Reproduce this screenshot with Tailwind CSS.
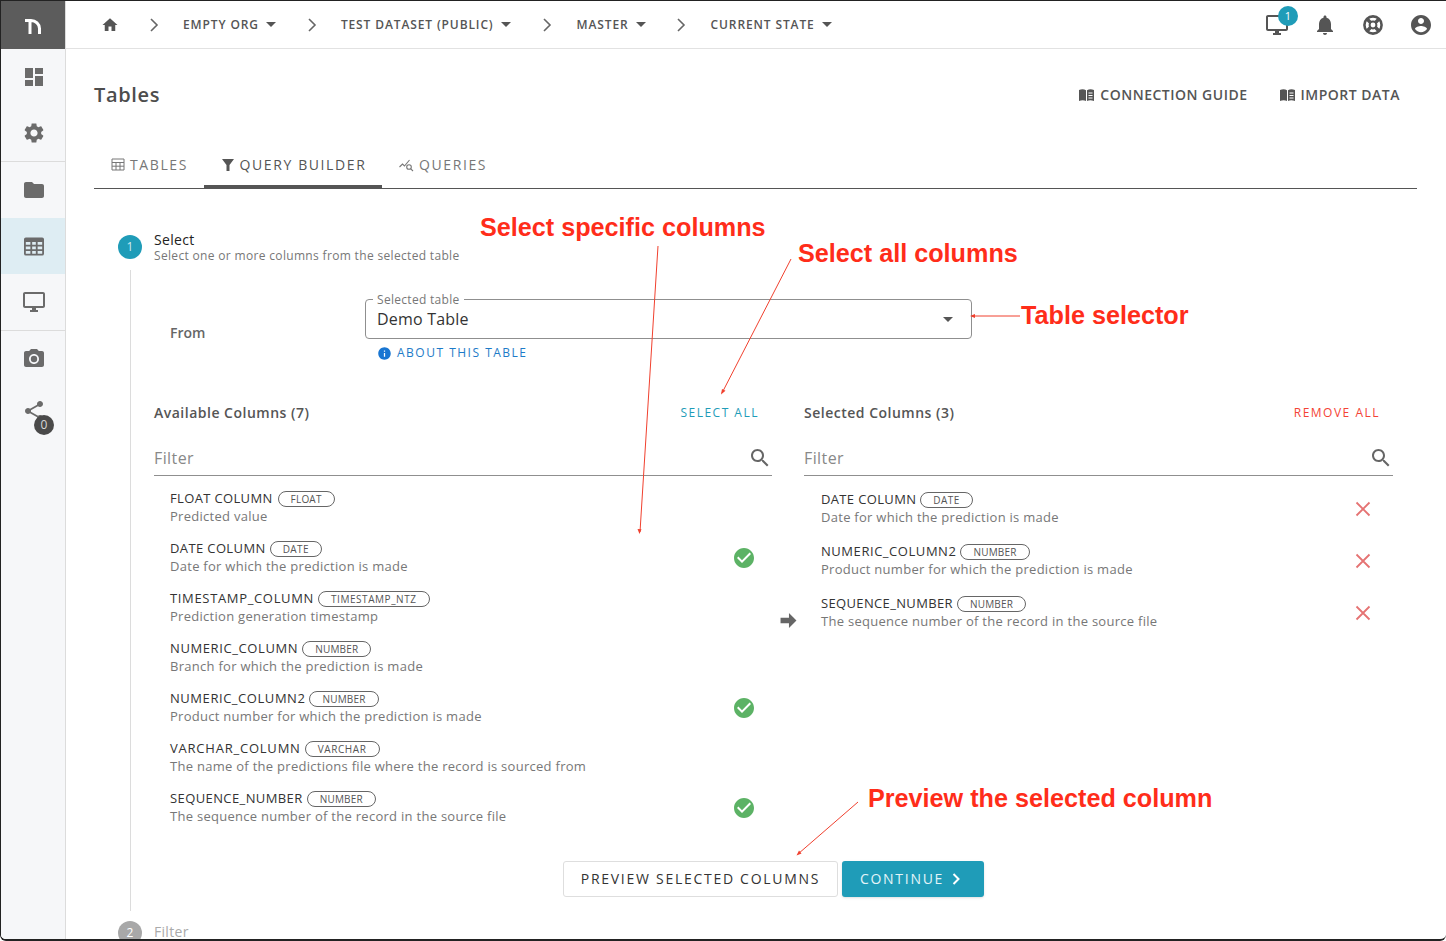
<!DOCTYPE html>
<html lang="en">
  <head>
    <meta charset="UTF-8" />
    <title>Tables</title>
    <script src="https://cdn.jsdelivr.net/npm/@tailwindcss/browser@4"></script>
  </head>
  <body class="bg-white font-['Open_Sans',sans-serif]">
    <div class="relative flex w-[1446px] h-[941px] overflow-hidden bg-white border-t border-l border-b-2 border-[#222] rounded-b-md">
      <!-- Sidebar -->
      <aside class="w-[65px] shrink-0 h-full bg-[#f6f7f9] border-r border-[#dcdcdc] flex flex-col text-[#6b6b6b]">
        <div class="h-[48px] bg-[#5c5c5c] flex items-center justify-center">
          <svg class="w-[20px] h-[20px]" viewBox="0 0 20 20" fill="none" stroke="#fff" stroke-width="3"><path d="M2 5.500h6a8.500 8 0 0 1 8.500 8V19M7 5.500V19" /></svg>
        </div>
        <div class="h-[56px] flex items-center justify-center pl-[1px]">
          <svg class="w-[24px] h-[24px]" viewBox="0 0 24 24" fill="currentColor"><path d="M3 13h8V3H3v10zm0 8h8v-6H3v6zm10 0h8V11h-8v10zm0-18v6h8V3h-8z" /></svg>
        </div>
        <div class="h-[56px] flex items-center justify-center pl-[1px]">
          <svg class="w-[24px] h-[24px]" viewBox="0 0 24 24" fill="currentColor"><path d="M19.14 12.94c.04-.3.06-.61.06-.94 0-.32-.02-.64-.07-.94l2.03-1.58c.18-.14.23-.41.12-.61l-1.92-3.32c-.12-.22-.37-.29-.59-.22l-2.39.96c-.5-.38-1.03-.7-1.62-.94l-.36-2.54c-.04-.24-.24-.41-.48-.41h-3.84c-.24 0-.43.17-.47.41l-.36 2.54c-.59.24-1.13.57-1.62.94l-2.39-.96c-.22-.08-.47 0-.59.22L2.74 8.87c-.12.21-.08.47.12.61l2.03 1.58c-.05.3-.09.63-.09.94s.02.64.07.94l-2.03 1.58c-.18.14-.23.41-.12.61l1.92 3.32c.12.22.37.29.59.22l2.39-.96c.5.38 1.03.7 1.62.94l.36 2.54c.05.24.24.41.48.41h3.84c.24 0 .44-.17.47-.41l.36-2.54c.59-.24 1.13-.56 1.62-.94l2.39.96c.22.08.47 0 .59-.22l1.92-3.32c.12-.22.07-.47-.12-.61l-2.01-1.58zM12 15.6c-1.98 0-3.6-1.62-3.6-3.6s1.62-3.6 3.6-3.6 3.6 1.62 3.6 3.6-1.62 3.6-3.6 3.6z" /></svg>
        </div>
        <div class="h-[57px] border-t border-[#dcdcdc] flex items-center justify-center pl-[1px]">
          <svg class="w-[24px] h-[24px]" viewBox="0 0 24 24" fill="currentColor"><path d="M10 4H4c-1.1 0-2 .9-2 2v12c0 1.1.9 2 2 2h16c1.1 0 2-.9 2-2V8c0-1.1-.9-2-2-2h-8l-2-2z" /></svg>
        </div>
        <div class="h-[56px] bg-[#deedf3] flex items-center justify-center pl-[1px]">
          <svg class="w-[20px] h-[19px]" viewBox="0 0 22 20" fill="currentColor"><path fill-rule="evenodd" d="M2 0h18a2 2 0 0 1 2 2v16a2 2 0 0 1-2 2H2a2 2 0 0 1-2-2V2a2 2 0 0 1 2-2zM2 5v3h5V5zm7 0v3h4V5zm6 0v3h5V5zM2 10v3h5v-3zm7 0v3h4v-3zm6 0v3h5v-3zM2 15v3h5v-3zm7 0v3h4v-3zm6 0v3h5v-3z" /></svg>
        </div>
        <div class="h-[56px] flex items-center justify-center pl-[1px]">
          <svg class="w-[24px] h-[24px]" viewBox="0 0 24 24" fill="currentColor"><path d="M21 2H3c-1.1 0-2 .9-2 2v12c0 1.1.9 2 2 2h7v2H8v2h8v-2h-2v-2h7c1.1 0 2-.9 2-2V4c0-1.1-.9-2-2-2zm0 14H3V4h18v12z" /></svg>
        </div>
        <div class="h-[57px] border-t border-[#dcdcdc] flex items-center justify-center pl-[1px]">
          <svg class="w-[24px] h-[24px]" viewBox="0 0 24 24" fill="currentColor"><path d="M9 2L7.17 4H4c-1.1 0-2 .9-2 2v12c0 1.1.9 2 2 2h16c1.1 0 2-.9 2-2V6c0-1.1-.9-2-2-2h-3.17L15 2H9zm3 15c-2.76 0-5-2.24-5-5s2.24-5 5-5 5 2.24 5 5-2.24 5-5 5z" /><circle cx="12" cy="12" r="3.2" /></svg>
        </div>
        <div class="relative h-[56px] flex items-center justify-center pl-[1px]">
          <svg class="w-[24px] h-[24px] -translate-y-[4px]" viewBox="0 0 24 24" fill="currentColor"><path d="M18 16.08c-.76 0-1.44.3-1.96.77L8.91 12.7c.05-.23.09-.46.09-.7s-.04-.47-.09-.7l7.05-4.11c.54.5 1.25.81 2.04.81 1.66 0 3-1.34 3-3s-1.34-3-3-3-3 1.34-3 3c0 .24.04.47.09.7L8.04 9.81C7.5 9.31 6.79 9 6 9c-1.66 0-3 1.34-3 3s1.34 3 3 3c.79 0 1.5-.31 2.04-.81l7.12 4.16c-.05.21-.08.43-.08.65 0 1.61 1.31 2.92 2.92 2.92s2.92-1.31 2.92-2.92-1.31-2.92-2.92-2.92z" /></svg>
          <span class="absolute left-[33px] top-[28px] w-[20px] h-[20px] rounded-full bg-[#4a4a4a] text-[#d8d8d8] text-[12px] leading-[20px] text-center">0</span>
        </div>
      </aside>

      <!-- Main -->
      <main class="flex-1 min-w-0 flex flex-col">
        <!-- Top bar -->
        <header class="h-[48px] shrink-0 border-b border-[#e2e2e2] flex items-center pl-[36px] pr-[13px] text-[#555] text-[12px] font-semibold tracking-[0.88px]">
          <svg class="w-[18px] h-[18px] -ml-[1px]" viewBox="0 0 24 24" fill="currentColor"><path d="M10 20v-6h4v6h5v-8h3L12 3 2 12h3v8z" /></svg>
          <svg class="w-[10px] h-[14px] ml-[30px] mr-[24px]" viewBox="0 0 10 14" fill="none" stroke="#666" stroke-width="1.6"><path d="M2 1l6 6-6 6" /></svg>
          <span>EMPTY ORG</span>
          <svg class="w-[10px] h-[5px] ml-[7px]" viewBox="0 0 10 5" fill="#555"><path d="M0 0h10L5 5z" /></svg>
          <svg class="w-[10px] h-[14px] ml-[31px] mr-[24px]" viewBox="0 0 10 14" fill="none" stroke="#666" stroke-width="1.6"><path d="M2 1l6 6-6 6" /></svg>
          <span>TEST DATASET (PUBLIC)</span>
          <svg class="w-[10px] h-[5px] ml-[7px]" viewBox="0 0 10 5" fill="#555"><path d="M0 0h10L5 5z" /></svg>
          <svg class="w-[10px] h-[14px] ml-[31px] mr-[25px]" viewBox="0 0 10 14" fill="none" stroke="#666" stroke-width="1.6"><path d="M2 1l6 6-6 6" /></svg>
          <span>MASTER</span>
          <svg class="w-[10px] h-[5px] ml-[7px]" viewBox="0 0 10 5" fill="#555"><path d="M0 0h10L5 5z" /></svg>
          <svg class="w-[10px] h-[14px] ml-[30px] mr-[25px]" viewBox="0 0 10 14" fill="none" stroke="#666" stroke-width="1.6"><path d="M2 1l6 6-6 6" /></svg>
          <span>CURRENT STATE</span>
          <svg class="w-[10px] h-[5px] ml-[7px]" viewBox="0 0 10 5" fill="#555"><path d="M0 0h10L5 5z" /></svg>
          <div class="ml-auto flex items-center gap-[24px]">
            <div class="relative w-[24px] h-[24px]">
              <svg class="w-[24px] h-[24px]" viewBox="0 0 24 24" fill="#555"><path d="M21 2H3c-1.1 0-2 .9-2 2v12c0 1.1.9 2 2 2h7v2H8v2h8v-2h-2v-2h7c1.1 0 2-.9 2-2V4c0-1.1-.9-2-2-2zm0 14H3V4h18v12z" /></svg>
              <span class="absolute -right-[9px] -top-[7px] w-[20px] h-[20px] rounded-full bg-[#1f9cb8] text-white text-[11px] font-normal leading-[20px] text-center tracking-normal">1</span>
            </div>
            <svg class="w-[24px] h-[24px]" viewBox="0 0 24 24" fill="#555"><path d="M12 22c1.1 0 2-.9 2-2h-4c0 1.1.89 2 2 2zm6-6v-5c0-3.07-1.64-5.64-4.5-6.32V4c0-.83-.67-1.5-1.5-1.5s-1.5.67-1.5 1.5v.68C7.63 5.36 6 7.92 6 11v5l-2 2v1h16v-1l-2-2z" /></svg>
            <svg class="w-[24px] h-[24px]" viewBox="0 0 24 24" fill="none" stroke="#555"><circle cx="12" cy="12" r="8.6" stroke-width="2.6" /><circle cx="12" cy="12" r="3.4" stroke-width="2" /><path stroke-width="3.4" d="M6 6l3.5 3.5M18 6l-3.5 3.5M6 18l3.5-3.5M18 18l-3.5-3.5" /></svg>
            <svg class="w-[24px] h-[24px]" viewBox="0 0 24 24" fill="#555"><path d="M12 2C6.48 2 2 6.48 2 12s4.48 10 10 10 10-4.48 10-10S17.52 2 12 2zm0 3c1.66 0 3 1.34 3 3s-1.34 3-3 3-3-1.34-3-3 1.34-3 3-3zm0 14.2c-2.5 0-4.71-1.28-6-3.22.03-1.99 4-3.08 6-3.08 1.99 0 5.97 1.09 6 3.08-1.29 1.94-3.5 3.22-6 3.22z" /></svg>
          </div>
        </header>

        <div class="pl-[28px] pr-[29px] flex-1 min-h-0 flex flex-col">
          <!-- Title row -->
          <div class="h-[92px] shrink-0 flex items-center justify-between pb-[1px] pr-[17px]">
            <h1 class="text-[20px] font-semibold text-[#4d4d4d] tracking-[0.65px]">Tables</h1>
            <div class="flex items-center gap-[32px] text-[14px] font-semibold text-[#555] tracking-[0.5px]">
              <a class="flex items-center gap-[6px]">
                <svg class="w-[15px] h-[12px] ml-[1px]" viewBox="0 0 15 12" fill="#555"><path d="M0 1c2.5-1 5-1 7 .3V12c-2-1-4.500-1-7 0z" /><path d="M8 1.300c2-1.300 4.500-1.300 7-.3v11c-2.500-1-5-1-7 0zM9.500 3.500v1h4v-1zm0 2.500v1h4V6zm0 2.500v1h4v-1z" fill-rule="evenodd" /></svg>
                CONNECTION GUIDE
              </a>
              <a class="flex items-center gap-[6px]">
                <svg class="w-[15px] h-[12px]" viewBox="0 0 15 12" fill="#555"><path d="M0 1c2.5-1 5-1 7 .3V12c-2-1-4.500-1-7 0z" /><path d="M8 1.300c2-1.300 4.500-1.300 7-.3v11c-2.500-1-5-1-7 0zM9.500 3.500v1h4v-1zm0 2.500v1h4V6zm0 2.500v1h4v-1z" fill-rule="evenodd" /></svg>
                IMPORT DATA
              </a>
            </div>
          </div>

          <!-- Tabs -->
          <nav class="h-[48px] shrink-0 border-b border-[#555] flex text-[14px] tracking-[1.6px] text-[#777]">
            <div class="w-[110px] flex items-center justify-center gap-[5px] pl-[1px]">
              <svg class="w-[14px] h-[13px]" viewBox="0 0 14 13" fill="none" stroke="#777"><path d="M1 1h12v11H1zM1 4.500h12M1 8.200h12M5 4.500V12M9 4.500V12" /></svg>
              TABLES
            </div>
            <div class="w-[178px] h-[47px] flex items-center justify-center gap-[6px] border-b-[3px] border-[#555] pt-[3px] pl-[2px] text-[#555]">
              <svg class="w-[12px] h-[12px]" viewBox="0 0 12 12" fill="#555"><path d="M0 0h12L7.500 6v6h-3V6z" /></svg>
              QUERY BUILDER
            </div>
            <div class="flex items-center gap-[5px] pl-[17px]">
              <svg class="w-[15px] h-[14px]" viewBox="0 0 15 14" fill="none" stroke="#777" stroke-width="1.1"><path d="M0.500 9l3-3 2 2 5-6" /><circle cx="10" cy="9" r="2.300" /><path d="M11.800 10.800L14 13" /></svg>
              QUERIES
            </div>
          </nav>

          <!-- Step 1 -->
          <section class="flex flex-col pl-[24px] pr-[24px]">
            <div class="flex items-center h-[50px] mt-[34px] -translate-y-[1px]">
              <span class="w-[24px] h-[24px] rounded-full bg-[#1f9cb8] text-[#cfeaf1] text-[12px] leading-[24px] text-center">1</span>
              <div class="ml-[12px]">
                <div class="text-[14px] leading-[17px] text-[#222] tracking-[0.3px]">Select</div>
                <div class="text-[12px] leading-[16px] tracking-[0.33px] text-[#777]">Select one or more columns from the selected table</div>
              </div>
            </div>

            <div class="ml-[12px] border-l border-[#dcdcdc] h-[641px] -mt-[3px] pl-[23px]">
              <!-- From -->
              <div class="flex mt-[29px] h-[62px]">
                <div class="w-[16px]"></div>
                <div class="w-[195px] text-[14px] font-semibold text-[#666] pt-[23px]">From</div>
                <div class="w-[607px]">
                  <div class="relative h-[40px] border border-[#8f8f8f] rounded-[4px] flex items-center justify-between px-[11px]">
                    <span class="absolute left-[7px] -top-[7px] bg-white px-[4px] text-[12px] leading-[14px] text-[#777] tracking-[0.3px]">Selected table</span>
                    <span class="text-[16px] text-[#333] tracking-[0.2px]">Demo Table</span>
                    <svg class="w-[10px] h-[5px] mr-[7px]" viewBox="0 0 10 5" fill="#555"><path d="M0 0h10L5 5z" /></svg>
                  </div>
                  <div class="flex items-center h-[28px] pl-[12px] gap-[5px] text-[12px] tracking-[1.5px] text-[#1e7bc8]">
                    <svg class="w-[15px] h-[15px]" viewBox="0 0 24 24" fill="#1976d2"><path d="M12 2C6.480 2 2 6.480 2 12s4.480 10 10 10 10-4.480 10-10S17.520 2 12 2zm1 15h-2v-6h2v6zm0-8h-2V7h2v2z" /></svg>
                    ABOUT THIS TABLE
                  </div>
                </div>
              </div>

              <!-- Columns -->
              <div class="grid grid-cols-[618px_1fr] gap-[8px] mt-[39px]">
                <!-- Available -->
                <div>
                  <div class="flex items-center justify-between h-[24px] pr-[13px]">
                    <h3 class="text-[14px] font-semibold text-[#555] tracking-[0.5px]">Available Columns (7)</h3>
                    <span class="text-[12px] tracking-[1.5px] text-[#1f9cb8] pt-[2px]">SELECT ALL</span>
                  </div>
                  <div class="flex items-center justify-between h-[39px] mt-[13px] pt-[4px] border-b border-[#8f8f8f]">
                    <span class="text-[16px] text-[#888] tracking-[0.4px]">Filter</span>
                    <svg class="w-[24px] h-[24px]" viewBox="0 0 24 24" fill="#666"><path d="M15.500 14h-.79l-.28-.27C15.410 12.590 16 11.110 16 9.500 16 5.910 13.090 3 9.500 3S3 5.910 3 9.500 5.910 16 9.500 16c1.610 0 3.090-.59 4.230-1.570l.27.28v.79l5 4.990L20.490 19l-4.990-5zm-6 0C7.010 14 5 11.990 5 9.500S7.010 5 9.500 5 14 7.010 14 9.500 11.990 14 9.500 14z" /></svg>
                  </div>
                  <ul class="mt-[7px] pl-[16px] pr-[16px]">
                    <li class="h-[50px] flex items-center justify-between">
                      <div>
                        <div class="flex items-center gap-[5px] h-[18px] text-[13px] text-[#333] tracking-[0.35px]">FLOAT COLUMN <span class="h-[16px] px-[12px] rounded-full border border-[#666] text-[10px] leading-[14px] text-[#555] tracking-[0.2px]">FLOAT</span></div>
                        <div class="h-[18px] leading-[18px] -translate-y-[1px] text-[13px] text-[#777] tracking-[0.28px]">Predicted value</div>
                      </div>
                    </li>
                    <li class="h-[50px] flex items-center justify-between">
                      <div>
                        <div class="flex items-center gap-[4px] h-[18px] text-[13px] text-[#333] tracking-[0.38px]">DATE COLUMN <span class="h-[16px] px-[12px] rounded-full border border-[#666] text-[10px] leading-[14px] text-[#555] tracking-[0.45px]">DATE</span></div>
                        <div class="h-[18px] leading-[18px] -translate-y-[1px] text-[13px] text-[#777] tracking-[0.28px]">Date for which the prediction is made</div>
                      </div>
                      <svg class="w-[24px] h-[24px]" viewBox="0 0 24 24" fill="#5cb265"><path d="M12 2C6.480 2 2 6.480 2 12s4.480 10 10 10 10-4.480 10-10S17.520 2 12 2zm-2 15l-5-5 1.410-1.410L10 14.170l7.590-7.590L19 8l-9 9z" /></svg>
                    </li>
                    <li class="h-[50px] flex items-center justify-between">
                      <div>
                        <div class="flex items-center gap-[4px] h-[18px] text-[13px] text-[#333] tracking-[0.66px]">TIMESTAMP_COLUMN <span class="h-[16px] px-[12px] rounded-full border border-[#666] text-[10px] leading-[14px] text-[#555] tracking-[0.55px]">TIMESTAMP_NTZ</span></div>
                        <div class="h-[18px] leading-[18px] -translate-y-[1px] text-[13px] text-[#777] tracking-[0.28px]">Prediction generation timestamp</div>
                      </div>
                    </li>
                    <li class="h-[50px] flex items-center justify-between">
                      <div>
                        <div class="flex items-center gap-[4px] h-[18px] text-[13px] text-[#333] tracking-[0.6px]">NUMERIC_COLUMN <span class="h-[16px] px-[12px] rounded-full border border-[#666] text-[10px] leading-[14px] text-[#555] tracking-[0.2px]">NUMBER</span></div>
                        <div class="h-[18px] leading-[18px] -translate-y-[1px] text-[13px] text-[#777] tracking-[0.28px]">Branch for which the prediction is made</div>
                      </div>
                    </li>
                    <li class="h-[50px] flex items-center justify-between">
                      <div>
                        <div class="flex items-center gap-[4px] h-[18px] text-[13px] text-[#333] tracking-[0.55px]">NUMERIC_COLUMN2 <span class="h-[16px] px-[12px] rounded-full border border-[#666] text-[10px] leading-[14px] text-[#555] tracking-[0.2px]">NUMBER</span></div>
                        <div class="h-[18px] leading-[18px] -translate-y-[1px] text-[13px] text-[#777] tracking-[0.28px]">Product number for which the prediction is made</div>
                      </div>
                      <svg class="w-[24px] h-[24px]" viewBox="0 0 24 24" fill="#5cb265"><path d="M12 2C6.480 2 2 6.480 2 12s4.480 10 10 10 10-4.480 10-10S17.520 2 12 2zm-2 15l-5-5 1.410-1.410L10 14.170l7.590-7.590L19 8l-9 9z" /></svg>
                    </li>
                    <li class="h-[50px] flex items-center justify-between">
                      <div>
                        <div class="flex items-center gap-[4px] h-[18px] text-[13px] text-[#333] tracking-[0.78px]">VARCHAR_COLUMN <span class="h-[16px] px-[12px] rounded-full border border-[#666] text-[10px] leading-[14px] text-[#555] tracking-[0.6px]">VARCHAR</span></div>
                        <div class="h-[18px] leading-[18px] -translate-y-[1px] text-[13px] text-[#777] tracking-[0.28px]">The name of the predictions file where the record is sourced from</div>
                      </div>
                    </li>
                    <li class="h-[50px] flex items-center justify-between">
                      <div>
                        <div class="flex items-center gap-[4px] h-[18px] text-[13px] text-[#333] tracking-[0.4px]">SEQUENCE_NUMBER <span class="h-[16px] px-[12px] rounded-full border border-[#666] text-[10px] leading-[14px] text-[#555] tracking-[0.2px]">NUMBER</span></div>
                        <div class="h-[18px] leading-[18px] -translate-y-[1px] text-[13px] text-[#777] tracking-[0.28px]">The sequence number of the record in the source file</div>
                      </div>
                      <svg class="w-[24px] h-[24px]" viewBox="0 0 24 24" fill="#5cb265"><path d="M12 2C6.480 2 2 6.480 2 12s4.480 10 10 10 10-4.480 10-10S17.520 2 12 2zm-2 15l-5-5 1.410-1.410L10 14.170l7.590-7.590L19 8l-9 9z" /></svg>
                    </li>
                  </ul>
                </div>

                <!-- Selected -->
                <div>
                  <div class="flex items-center justify-between h-[24px] pl-[24px] pr-[13px] w-[613px]">
                    <h3 class="text-[14px] font-semibold text-[#555] tracking-[0.5px]">Selected Columns (3)</h3>
                    <span class="text-[12px] tracking-[1.5px] text-[#f44336] pt-[2px]">REMOVE ALL</span>
                  </div>
                  <div class="ml-[24px] w-[589px] flex items-center justify-between h-[39px] mt-[13px] pt-[4px] border-b border-[#8f8f8f]">
                    <span class="text-[16px] text-[#888] tracking-[0.4px]">Filter</span>
                    <svg class="w-[24px] h-[24px]" viewBox="0 0 24 24" fill="#666"><path d="M15.500 14h-.79l-.28-.27C15.410 12.590 16 11.110 16 9.500 16 5.910 13.090 3 9.500 3S3 5.910 3 9.500 5.910 16 9.500 16c1.610 0 3.090-.59 4.230-1.570l.27.28v.79l5 4.990L20.490 19l-4.990-5zm-6 0C7.010 14 5 11.990 5 9.500S7.010 5 9.500 5 14 7.010 14 9.500 11.990 14 9.500 14z" /></svg>
                  </div>
                  <ul class="mt-[7px] w-[592px]">
                    <li class="h-[52px] flex items-center">
                      <div class="w-[41px]"></div>
                      <div class="flex-1">
                        <div class="flex items-center gap-[4px] h-[18px] text-[13px] text-[#333] tracking-[0.35px]">DATE COLUMN <span class="h-[16px] px-[12px] rounded-full border border-[#666] text-[10px] leading-[14px] text-[#555] tracking-[0.45px]">DATE</span></div>
                        <div class="h-[18px] leading-[18px] -translate-y-[1px] text-[13px] text-[#777] tracking-[0.28px]">Date for which the prediction is made</div>
                      </div>
                      <svg class="w-[16px] h-[16px] mr-[1px]" viewBox="0 0 16 16" fill="none" stroke="#e57373" stroke-width="1.800"><path d="M1.500 1.500l13 13M14.500 1.500l-13 13" /></svg>
                    </li>
                    <li class="h-[52px] flex items-center">
                      <div class="w-[41px]"></div>
                      <div class="flex-1">
                        <div class="flex items-center gap-[4px] h-[18px] text-[13px] text-[#333] tracking-[0.55px]">NUMERIC_COLUMN2 <span class="h-[16px] px-[12px] rounded-full border border-[#666] text-[10px] leading-[14px] text-[#555] tracking-[0.2px]">NUMBER</span></div>
                        <div class="h-[18px] leading-[18px] -translate-y-[1px] text-[13px] text-[#777] tracking-[0.28px]">Product number for which the prediction is made</div>
                      </div>
                      <svg class="w-[16px] h-[16px] mr-[1px]" viewBox="0 0 16 16" fill="none" stroke="#e57373" stroke-width="1.800"><path d="M1.500 1.500l13 13M14.500 1.500l-13 13" /></svg>
                    </li>
                    <li class="h-[52px] flex items-center">
                      <div class="w-[41px] pt-[15px]">
                        <svg class="w-[17px] h-[15px]" viewBox="0 0 17 16" fill="#666"><path d="M0 5h9V0l8 8-8 8v-5H0z" /></svg>
                      </div>
                      <div class="flex-1">
                        <div class="flex items-center gap-[4px] h-[18px] text-[13px] text-[#333] tracking-[0.35px]">SEQUENCE_NUMBER <span class="h-[16px] px-[12px] rounded-full border border-[#666] text-[10px] leading-[14px] text-[#555] tracking-[0.2px]">NUMBER</span></div>
                        <div class="h-[18px] leading-[18px] -translate-y-[1px] text-[13px] text-[#777] tracking-[0.28px]">The sequence number of the record in the source file</div>
                      </div>
                      <svg class="w-[16px] h-[16px] mr-[1px]" viewBox="0 0 16 16" fill="none" stroke="#e57373" stroke-width="1.800"><path d="M1.500 1.500l13 13M14.500 1.500l-13 13" /></svg>
                    </li>
                  </ul>
                </div>
              </div>

              <!-- Buttons -->
              <div class="flex mt-[28px] ml-[409px] gap-[4px] text-[14px] leading-[14px] tracking-[1.72px]">
                <button class="w-[275px] h-[36px] border border-[#dedede] rounded-[3px] text-[#333] bg-white pb-[1px]">PREVIEW SELECTED COLUMNS</button>
                <button class="w-[142px] h-[36px] rounded-[3px] bg-[#1f9cb8] text-[#e4f4f8] flex items-center justify-center gap-[8px] shadow-sm pr-[6px] pb-[1px]">
                  CONTINUE
                  <svg class="w-[8px] h-[12px]" viewBox="0 0 8 12" fill="none" stroke="#fff" stroke-width="2"><path d="M1.500 1l5 5-5 5" /></svg>
                </button>
              </div>
            </div>

            <!-- Step 2 -->
            <div class="flex items-center mt-[10px]">
              <span class="w-[24px] h-[24px] rounded-full bg-[#a8a8a8] text-white text-[12px] leading-[24px] text-center">2</span>
              <span class="ml-[12px] text-[14px] leading-[18px] pb-[3px] text-[#aaa] tracking-[0.3px]">Filter</span>
            </div>
          </section>
        </div>
      </main>

      <!-- Annotations drawn on top of the screenshot -->
      <div class="absolute left-[479px] top-[209px] text-[25.2px] leading-[34px] font-bold text-[#ff2d1a] font-['Liberation_Sans',sans-serif] whitespace-nowrap">Select specific columns</div>
      <div class="absolute left-[797px] top-[235px] text-[25.2px] leading-[34px] font-bold text-[#ff2d1a] font-['Liberation_Sans',sans-serif] whitespace-nowrap">Select all columns</div>
      <div class="absolute left-[1020px] top-[297px] text-[25.2px] leading-[34px] font-bold text-[#ff2d1a] font-['Liberation_Sans',sans-serif] whitespace-nowrap">Table selector</div>
      <div class="absolute left-[867px] top-[780px] text-[25.2px] leading-[34px] font-bold text-[#ff2d1a] font-['Liberation_Sans',sans-serif] whitespace-nowrap">Preview the selected column</div>
      <svg class="absolute left-0 top-0 w-[1446px] h-[941px] pointer-events-none" viewBox="0 0 1446 941" fill="none" stroke="#f0402e" stroke-width="1">
        <path d="M657 245L639 531" />
        <path d="M790 258L721 392" />
        <path d="M1019 315H971" />
        <path d="M857 801L797 853" />
        <g fill="#f0402e" stroke="none">
          <path d="M638.500 533l-2-5 4 .3z" />
          <path d="M720 393.500l1-5.500 3.500 1.800z" />
          <path d="M969 315l5-2v4z" />
          <path d="M795.500 854.500l2.500-5 2.500 3z" />
        </g>
      </svg>
    </div>
  </body>
</html>
